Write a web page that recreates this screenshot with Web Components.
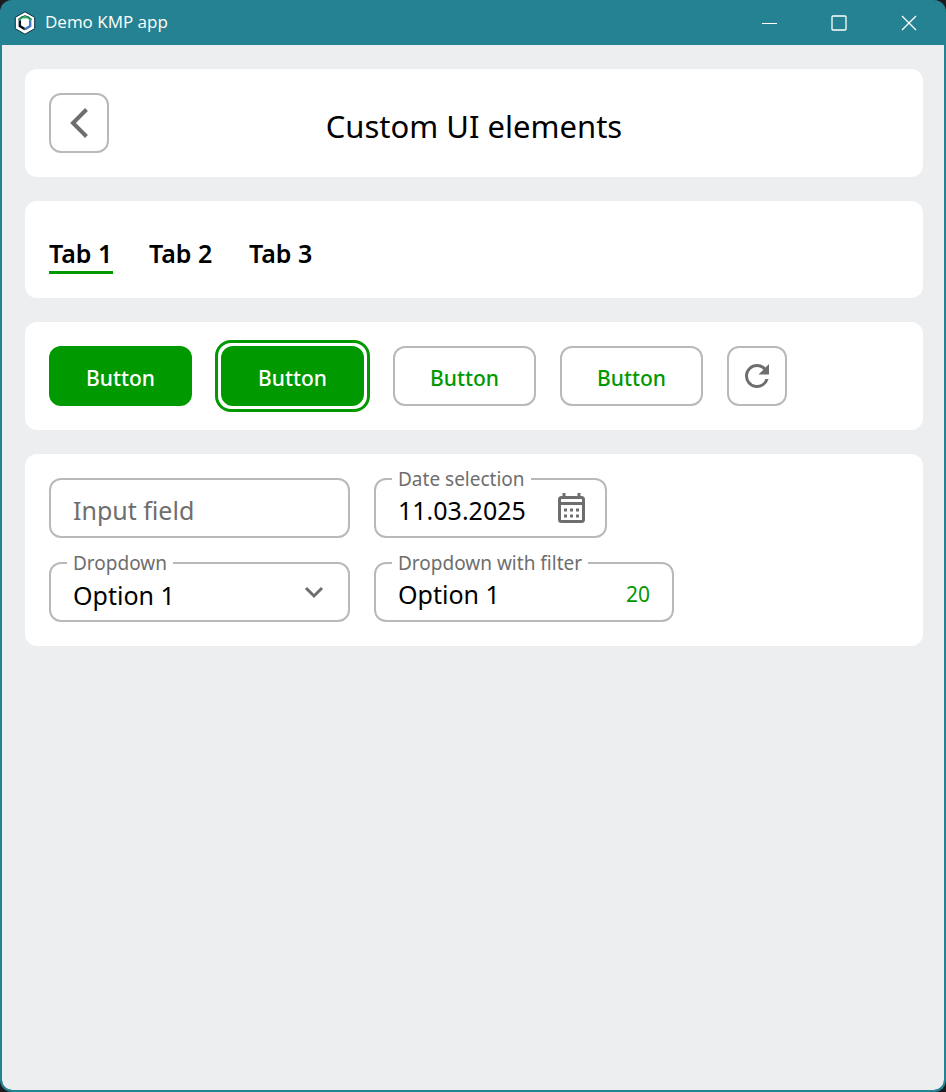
<!DOCTYPE html>
<html lang="en">
<head>
<meta charset="utf-8">
<title>Demo KMP app</title>
<style>
  html { height: 100%; background: #1c1c1e; }
  body {
    margin: 0;
    min-height: 100%;
    display: flex;
    font-family: "Noto Sans", "Open Sans", sans-serif;
    color: #000;
    --accent: #009900;
    --line: #b9b9b9;
    --muted: #6e6e6e;
    --chrome: #258292;
    --surface: #edeef0;
  }
</style>
</head>
<body>
<app-window caption="Demo KMP app">
  <ui-card><page-header>Custom UI elements</page-header></ui-card>
  <ui-card><tab-bar tabs="Tab 1,Tab 2,Tab 3"></tab-bar></ui-card>
  <ui-card>
    <button-row>
      <ui-button variant="filled">Button</ui-button>
      <ui-button variant="filled" ring>Button</ui-button>
      <ui-button>Button</ui-button>
      <ui-button>Button</ui-button>
      <icon-button label="Refresh">
        <svg width="36" height="36" viewBox="0 0 24 24" fill="#6e6e6e"><path d="M17.65 6.35A7.96 7.96 0 0 0 12 4a8 8 0 1 0 7.73 10h-2.08A6 6 0 1 1 12 6c1.66 0 3.14.69 4.22 1.78L13 11h7V4z"/></svg>
      </icon-button>
    </button-row>
  </ui-card>
  <ui-card>
    <field-grid>
      <text-field placeholder="Input field"></text-field>
      <text-field label="Date selection" value="11.03.2025" compact>
        <svg slot="end" width="30" height="32" viewBox="0 0 30 32" fill="none" stroke="#6e6e6e" stroke-width="3"><rect x="2.500" y="5.500" width="24" height="24" rx="2"/><path d="M2.500 11.500h24"/><path d="M7 1v5M22 1v5"/><path d="M7 18h3m3 0h3m3 0h3M7 24h3m3 0h3m3 0h3"/></svg>
      </text-field>
      <select-field label="Dropdown" options="Option 1,Option 2,Option 3"></select-field>
      <text-field label="Dropdown with filter" value="Option 1"><span slot="end">20</span></text-field>
    </field-grid>
  </ui-card>
</app-window>

<script>
const define = (name, render) => customElements.define(name, class extends HTMLElement {
  connectedCallback() {
    if (this.shadowRoot) return;
    this.attachShadow({ mode: "open" }).innerHTML = render(this);
  }
});
const attr = (el, name) => el.getAttribute(name) || "";

define("app-window", el => `
  <style>
    :host { flex: 1; display: flex; flex-direction: column; box-sizing: border-box;
      border: 2px solid var(--chrome); border-top: 0; border-radius: 12px; overflow: hidden; background: var(--chrome); }
    header { display: flex; align-items: center; height: 45px; color: #fff; }
    .logo { margin-left: 12px; }
    h1 { flex: 1; margin: 0 0 0 9px; padding-bottom: 2px; font: 400 17px/24px "Open Sans", "Noto Sans", sans-serif; }
    button { width: 70px; height: 45px; padding: 0; border: 0; background: none; display: grid; place-items: center; }
    main { flex: 1; display: flex; flex-direction: column; gap: 24px; padding: 24px 21px 24px 23px;
      background: var(--surface); border-radius: 0 0 10px 10px; }
  </style>
  <header>
    <svg class="logo" width="22" height="24" viewBox="0 0 22 24" aria-hidden="true">
      <path d="M11 .8 20.700 6.300v11.400L11 23.200 1.300 17.700V6.300z" fill="#fff" stroke="#083042" stroke-width="1"/>
      <path d="M5.800 9v6l5.200 3.200" fill="none" stroke="#06151d" stroke-width="2.400"/>
      <path d="M11 18.200 16.200 15V9" fill="none" stroke="#4279c8" stroke-width="2.400"/>
      <path d="M5 9.200 8 6.200h6l3 3" fill="none" stroke="#37b870" stroke-width="2.400"/>
      <path d="M4 8.500 11 4.300l7 4.200" fill="none" stroke="#0b3a35" stroke-width=".7"/>
    </svg>
    <h1>${attr(el, "caption")}</h1>
    <button aria-label="Minimize"><svg width="16" height="16"><path d="M1 8.500h15" stroke="#fff"/></svg></button>
    <button aria-label="Maximize"><svg width="16" height="16"><rect x="1" y="1" width="14" height="14" rx="1" fill="none" stroke="#fff" stroke-width="1.300"/></svg></button>
    <button aria-label="Close"><svg width="16" height="16"><path d="m1 1 14 14M15 1 1 15" stroke="#fff" stroke-width="1.300"/></svg></button>
  </header>
  <main><slot></slot></main>`);

define("ui-card", () => `
  <style>:host { display: block; padding: 24px; border-radius: 12px; background: #fff; }</style>
  <slot></slot>`);

define("icon-button", el => `
  <style>
    :host { display: block; }
    button { box-sizing: border-box; width: 60px; height: 60px; padding: 0; display: grid; place-items: center;
      border: 2px solid var(--line); border-radius: 12px; background: #fff; }
  </style>
  <button aria-label="${attr(el, "label")}"><slot></slot></button>`);

define("page-header", () => `
  <style>
    :host { display: grid; grid-template-columns: 60px 1fr 60px; align-items: center; }
    h2 { margin: 0; padding-top: 5px; font-size: 31px; line-height: 40px; font-weight: 400; text-align: center; }
  </style>
  <icon-button label="Back"><svg width="20" height="30" viewBox="0 0 20 30" fill="none" stroke="#6e6e6e" stroke-width="4"><path d="M17.500 1.500 4 15l13.500 13.500"/></svg></icon-button>
  <h2><slot></slot></h2>`);

define("tab-bar", el => `
  <style>
    :host { display: flex; gap: 36px; height: 49px; align-items: flex-end; }
    button { font: 600 25px/32px "Noto Sans", "Open Sans", sans-serif; color: #000; padding: 0 0 2px; border: 0;
      border-bottom: 3px solid transparent; background: none; min-width: 64px; text-align: left; }
    button[aria-selected=true] { border-bottom-color: var(--accent); }
  </style>
  ${attr(el, "tabs").split(",").map((t, i) => `<button role="tab" aria-selected="${i === 0}">${t}</button>`).join("")}`);

define("button-row", () => `
  <style>:host { display: flex; flex-wrap: wrap; align-items: center; gap: 24px; }</style>
  <slot></slot>`);

define("ui-button", () => `
  <style>
    :host { display: block; }
    :host([ring]) { margin: -6px -1px; padding: 3px; border: 3px solid var(--accent); border-radius: 16px; }
    button { box-sizing: border-box; width: 143px; height: 60px; padding: 4px 0 0; border: 2px solid var(--line);
      border-radius: 12px; background: #fff; color: var(--accent); font: 500 21px/28px "Noto Sans", "Open Sans", sans-serif; }
    :host([variant=filled]) button { background: var(--accent); border-color: var(--accent); color: #fff; }
  </style>
  <button><slot></slot></button>`);

define("field-grid", () => `
  <style>:host { display: grid; grid-template-columns: 301px 300px; gap: 24px; }</style>
  <slot></slot>`);

const fieldStyle = `
  :host { display: block; position: relative; }
  :host([compact]) { width: 233px; }
  .box { box-sizing: border-box; height: 60px; display: flex; align-items: center; padding: 0 22px;
    border: 2px solid var(--line); border-radius: 12px; }
  label { position: absolute; left: 18px; top: -11px; padding: 0 6px; background: #fff; color: var(--muted);
    font-size: 19px; line-height: 24px; }
  input, select { flex: 1; min-width: 0; width: 0; height: 56px; box-sizing: border-box; margin: 0; padding: 4px 0 0; border: 0;
    outline: 0; background: none; appearance: none; color: #000; font: 400 25px/32px "Noto Sans", "Open Sans", sans-serif; }
  select { padding-top: 6px; }
  input::placeholder { color: var(--muted); opacity: 1; }`;

define("text-field", el => `
  <style>${fieldStyle}
    ::slotted(svg) { margin-right: -4px; }
    ::slotted(span) { color: var(--accent); font-size: 21px; line-height: 28px; padding-top: 4px; }
  </style>
  <div class="box">
    <input id="field" type="text" value="${attr(el, "value")}" placeholder="${attr(el, "placeholder")}"${attr(el, "label") ? "" : ` aria-label="${attr(el, "placeholder")}"`}>
    <slot name="end"></slot>
  </div>
  ${attr(el, "label") ? `<label for="field">${attr(el, "label")}</label>` : ""}`);

define("select-field", el => `
  <style>${fieldStyle}</style>
  <div class="box">
    <select id="field">${attr(el, "options").split(",").map(o => `<option>${o}</option>`).join("")}</select>
    <svg width="24" height="24" viewBox="0 0 24 24" fill="none" stroke="#6e6e6e" stroke-width="3" aria-hidden="true"><path d="m4 8 8 8 8-8"/></svg>
  </div>
  <label for="field">${attr(el, "label")}</label>`);
</script>
</body>
</html>
